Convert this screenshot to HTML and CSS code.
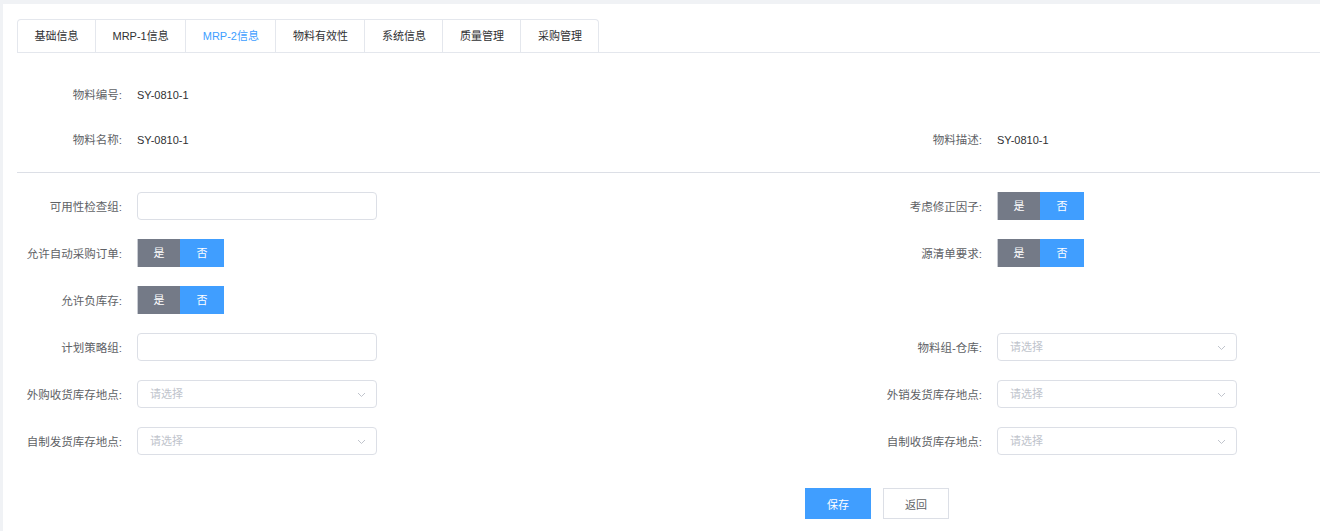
FILE: index.html
```html
<!DOCTYPE html>
<html lang="zh-CN">
<head>
    <meta charset="UTF-8">
    <title>物料信息</title>
    <link rel="stylesheet" href="styles.css">
</head>
<body>
    <div class="page">
        <div class="tab-nav">
            <div class="tab-list">
                <div class="tab">基础信息</div>
                <div class="tab">MRP-1信息</div>
                <div class="tab active">MRP-2信息</div>
                <div class="tab">物料有效性</div>
                <div class="tab">系统信息</div>
                <div class="tab">质量管理</div>
                <div class="tab">采购管理</div>
            </div>
        </div>

        <div class="info">
            <div class="row text-row">
                <div class="item"><span class="label">物料编号:</span><span class="value">SY-0810-1</span></div>
                <div class="item"></div>
            </div>
            <div class="row text-row">
                <div class="item"><span class="label">物料名称:</span><span class="value">SY-0810-1</span></div>
                <div class="item"><span class="label">物料描述:</span><span class="value">SY-0810-1</span></div>
            </div>
        </div>

        <div class="divider"></div>

        <div class="form">
            <div class="row">
                <div class="item"><span class="label">可用性检查组:</span><div class="input"></div></div>
                <div class="item"><span class="label">考虑修正因子:</span>
                    <div class="switch"><span class="yes">是</span><span class="no">否</span></div>
                </div>
            </div>
            <div class="row">
                <div class="item"><span class="label">允许自动采购订单:</span>
                    <div class="switch"><span class="yes">是</span><span class="no">否</span></div>
                </div>
                <div class="item"><span class="label">源清单要求:</span>
                    <div class="switch"><span class="yes">是</span><span class="no">否</span></div>
                </div>
            </div>
            <div class="row">
                <div class="item"><span class="label">允许负库存:</span>
                    <div class="switch"><span class="yes">是</span><span class="no">否</span></div>
                </div>
                <div class="item"></div>
            </div>
            <div class="row">
                <div class="item"><span class="label">计划策略组:</span><div class="input"></div></div>
                <div class="item"><span class="label">物料组-仓库:</span>
                    <div class="input select">请选择<svg class="arrow" width="9" height="6" viewBox="0 0 9 6"><polyline points="1,1 4.5,4.5 8,1" fill="none" stroke="#c0c4cc" stroke-width="1"/></svg></div>
                </div>
            </div>
            <div class="row">
                <div class="item"><span class="label">外购收货库存地点:</span>
                    <div class="input select">请选择<svg class="arrow" width="9" height="6" viewBox="0 0 9 6"><polyline points="1,1 4.5,4.5 8,1" fill="none" stroke="#c0c4cc" stroke-width="1"/></svg></div>
                </div>
                <div class="item"><span class="label">外销发货库存地点:</span>
                    <div class="input select">请选择<svg class="arrow" width="9" height="6" viewBox="0 0 9 6"><polyline points="1,1 4.5,4.5 8,1" fill="none" stroke="#c0c4cc" stroke-width="1"/></svg></div>
                </div>
            </div>
            <div class="row">
                <div class="item"><span class="label">自制发货库存地点:</span>
                    <div class="input select">请选择<svg class="arrow" width="9" height="6" viewBox="0 0 9 6"><polyline points="1,1 4.5,4.5 8,1" fill="none" stroke="#c0c4cc" stroke-width="1"/></svg></div>
                </div>
                <div class="item"><span class="label">自制收货库存地点:</span>
                    <div class="input select">请选择<svg class="arrow" width="9" height="6" viewBox="0 0 9 6"><polyline points="1,1 4.5,4.5 8,1" fill="none" stroke="#c0c4cc" stroke-width="1"/></svg></div>
                </div>
            </div>
        </div>

        <div class="actions">
            <button class="btn primary">保存</button>
            <button class="btn">返回</button>
        </div>
    </div>
</body>
</html>
```

FILE: styles.css
```css
* {
    margin: 0;
    padding: 0;
    box-sizing: border-box;
}

body {
    background: #f0f2f5;
    font-family: "Liberation Sans", "Noto Sans CJK SC", sans-serif;
    font-size: 11px;
    color: #303133;
}

.page {
    margin: 4px 0 0 3px;
    height: 527px;
    background: #fff;
    padding-top: 15px;
    overflow: hidden;
}

/* tabs */
.tab-nav {
    margin-left: 14px;
    border-bottom: 1px solid #e4e7ed;
}

.tab-list {
    display: inline-flex;
    border: 1px solid #e4e7ed;
    border-bottom: none;
    border-radius: 4px 4px 0 0;
}

.tab {
    height: 32px;
    line-height: 32px;
    padding: 0 16.5px;
    color: #303133;
    border-left: 1px solid #e4e7ed;
}

.tab:first-child {
    border-left: none;
}

.tab.active {
    color: #409eff;
}

/* rows */
.row {
    display: grid;
    grid-template-columns: 860px 1fr;
    padding-left: 14px;
}

.item {
    display: flex;
    align-items: center;
}

.label {
    width: 105px;
    margin-right: 15px;
    text-align: right;
    font-size: 11.5px;
    color: #606266;
}

.info {
    padding-top: 32px;
}

.text-row {
    height: 20px;
    line-height: 20px;
}

.text-row + .text-row {
    margin-top: 25px;
}

.value {
    color: #303133;
}

.divider {
    margin: 22px 0 0 14px;
    height: 1px;
    background: #dcdfe6;
}

.form {
    padding-top: 19px;
    padding-bottom: 14px;
}

.form .row {
    height: 28px;
    margin-top: 19px;
}

.form .row:first-child {
    margin-top: 0;
}

.input {
    width: 240px;
    height: 28px;
    border: 1px solid #dcdfe6;
    border-radius: 4px;
    background: #fff;
}

.select {
    position: relative;
    padding-left: 12px;
    line-height: 26px;
    color: #c0c4cc;
}

.arrow {
    position: absolute;
    right: 10px;
    top: 11px;
}

.switch {
    display: flex;
    height: 28px;
    line-height: 28px;
    color: #fff;
    text-align: center;
}

.switch .yes {
    width: 43px;
    background: #747a87;
    border-left: 1px solid #c9ccd3;
}

.switch .no {
    width: 44px;
    background: #409eff;
}

/* buttons */
.actions {
    display: flex;
    gap: 12px;
    padding-left: 802px;
    padding-top: 19px;
}

.btn {
    width: 66px;
    height: 31px;
    border: 1px solid #dcdfe6;
    background: #fff;
    color: #606266;
    font-family: "Liberation Sans", "Noto Sans CJK SC", sans-serif;
    font-size: 11px;
    cursor: pointer;
}

.btn.primary {
    background: #409eff;
    border-color: #409eff;
    color: #fff;
}
```
